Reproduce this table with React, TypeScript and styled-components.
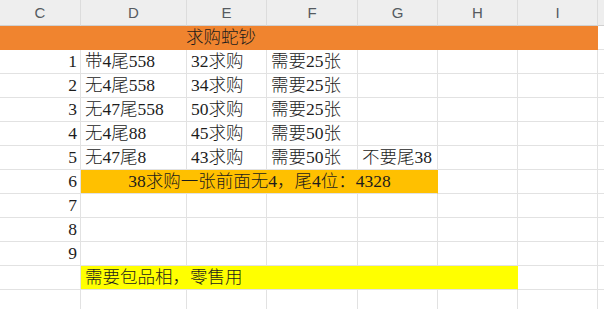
import React from "react";
import styled, { createGlobalStyle } from "styled-components";

const Global = createGlobalStyle`
  html, body { margin: 0; padding: 0; background: #ffffff; }
  body { overflow: hidden; }
`;

const COLS = ["C", "D", "E", "F", "G", "H", "I", ""];

const Sheet = styled.div`
  display: grid;
  grid-template-columns: 81px 106px 80px 91px 80px 80px 80px 1fr;
  grid-template-rows: 26px repeat(12, 24px);
  width: 604px;
  height: 309px;
  overflow: hidden;
  font-family: "Liberation Serif", "Noto Sans CJK SC", serif;
  font-size: 17.5px;
  font-weight: 300;
  color: #1c1c1c;
`;

const HeadCell = styled.div`
  box-sizing: border-box;
  background: #eeeeee;
  border-right: 1px solid #dcdcdc;
  border-bottom: 1px solid #d0d0d0;
  display: flex;
  align-items: center;
  justify-content: center;
  font-family: "Liberation Sans", Arial, sans-serif;
  font-weight: 400;
  font-size: 15px;
  color: #555a60;
`;

const Cell = styled.div<{ $span?: number; $bg?: string; $align?: string; $pl?: number }>`
  box-sizing: border-box;
  grid-column: span ${(p) => p.$span ?? 1};
  background: ${(p) => p.$bg ?? "#ffffff"};
  border-right: 1px solid ${(p) => p.$bg ?? "#e2e2e2"};
  border-bottom: 1px solid #e2e2e2;
  display: flex;
  align-items: center;
  justify-content: ${(p) => p.$align ?? "flex-start"};
  padding: 0 3px 0 ${(p) => p.$pl ?? 4}px;
  white-space: nowrap;
  overflow: visible;
  line-height: 1;
`;

const RowNum = styled(Cell)`
  justify-content: flex-end;
  padding-right: 3px;
`;

const TitleCell = styled(Cell)`
  border-bottom-color: #f0842f;
`;

type Row = { n: string; cells: string[] };

const rows: Row[] = [
  { n: "1", cells: ["带4尾558", "32求购", "需要25张", ""] },
  { n: "2", cells: ["无4尾558", "34求购", "需要25张", ""] },
  { n: "3", cells: ["无47尾558", "50求购", "需要25张", ""] },
  { n: "4", cells: ["无4尾88", "45求购", "需要50张", ""] },
  { n: "5", cells: ["无47尾8", "43求购", "需要50张", "不要尾38"] },
];

const Blank = () => (
  <>
    <Cell />
    <Cell />
    <Cell />
  </>
);

export default function App() {
  return (
    <>
      <Global />
      <Sheet>
        {COLS.map((c, i) => (
          <HeadCell key={i}>{c}</HeadCell>
        ))}
        <TitleCell $span={7} $bg="#f0842f" $pl={186}>求购蛇钞</TitleCell>
        <Cell />
        {rows.map((r) => (
          <React.Fragment key={r.n}>
            <RowNum>{r.n}</RowNum>
            {r.cells.map((t, i) => (
              <Cell key={i}>{t}</Cell>
            ))}
            <Blank />
          </React.Fragment>
        ))}
        <RowNum>6</RowNum>
        <Cell $span={4} $bg="#ffc000" $align="center">38求购一张前面无4，尾4位：4328</Cell>
        <Blank />
        {["7", "8", "9"].map((n) => (
          <React.Fragment key={n}>
            <RowNum>{n}</RowNum>
            <Cell />
            <Cell />
            <Cell />
            <Cell />
            <Blank />
          </React.Fragment>
        ))}
        <RowNum />
        <Cell $span={5} $bg="#ffff00">需要包品相，零售用</Cell>
        <Cell />
        <Cell />
        {COLS.map((_, i) => (
          <Cell key={"e" + i} />
        ))}
        {COLS.map((_, i) => (
          <Cell key={"f" + i} />
        ))}
      </Sheet>
    </>
  );
}
